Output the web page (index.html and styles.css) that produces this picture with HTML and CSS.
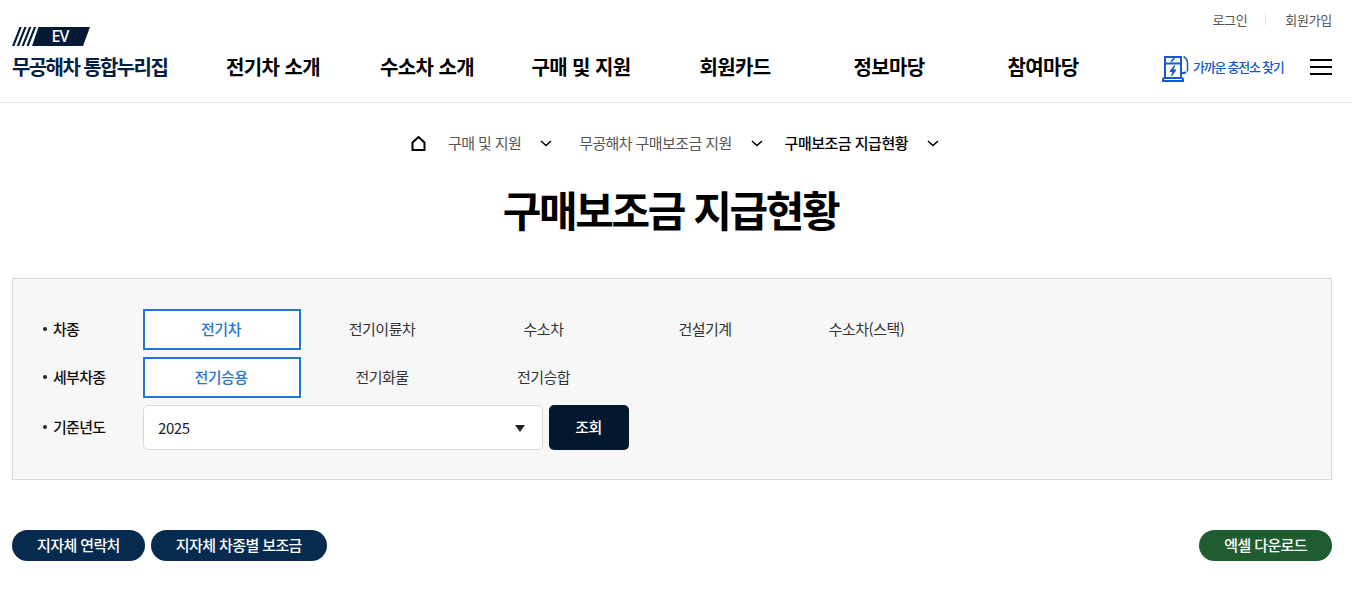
FILE: index.html
```html
<!DOCTYPE html>
<html lang="ko">
<head>
  <meta charset="UTF-8">
  <title>구매보조금 지급현황</title>
  <link rel="stylesheet" href="styles.css">
</head>
<body>

  <header class="site-header">
    <a class="logo" href="#">
      <svg class="logo-mark" width="78" height="19" viewBox="0 0 78 19">
        <path d="M0 19 7.500 0h2.300L2.300 19zM4.800 19 12.300 0h2.300L7.100 19zM9.600 19 17.100 0h2.300l-7.500 19zM14.400 19 21.900 0h2.300l-7.500 19zM20 19 26.500 0H78l-7 19z" fill="#041a35"/>
        <text x="48" y="15" text-anchor="middle" class="logo-ev">EV</text>
      </svg>
      <span class="logo-name">무공해차 통합누리집</span>
    </a>

    <div class="header-right">
      <div class="util-links">
        <a href="#">로그인</a>
        <span class="util-sep"></span>
        <a href="#">회원가입</a>
      </div>
      <div class="header-main">
        <nav class="gnb">
          <a href="#">전기차 소개</a>
          <a href="#">수소차 소개</a>
          <a href="#">구매 및 지원</a>
          <a href="#">회원카드</a>
          <a href="#">정보마당</a>
          <a href="#">참여마당</a>
        </nav>
        <a class="charger-link" href="#">
          <svg width="28" height="27" viewBox="0 0 28 27" fill="none" stroke="#1659c9" stroke-width="2">
            <path d="M3 23V2h16v21"/>
            <path d="M1 26v-1.500q0-1.500 1.500-1.500h17q1.500 0 1.500 1.500V26z"/>
            <path d="M3 8.500h16"/>
            <path d="M12.500 2.500 9 7" stroke-width="1.500"/>
            <path d="M12.500 10.500 8 16.500h3l-1.500 4.500 4.500-6h-3z" fill="#1659c9" stroke-width="1"/>
            <path d="M19 18h3q1.500 0 1.500-1.500"/>
            <path d="M21.500 1.500q4 2.500 4 6.500v8.500" stroke-width="1.500"/>
          </svg>
          <span>가까운 충전소 찾기</span>
        </a>
        <button class="menu-btn" type="button" aria-label="메뉴">
          <span></span><span></span><span></span>
        </button>
      </div>
    </div>
  </header>

  <main>
    <div class="breadcrumb">
      <svg class="home-icon" width="15" height="15" viewBox="0 0 15 15" fill="none" stroke="#000" stroke-width="2">
        <path d="M1.500 14V6.500L7.500 1l6 5.500V14z"/>
      </svg>
      <a class="crumb crumb-1" href="#">구매 및 지원</a>
      <svg class="chevron" width="12" height="7" viewBox="0 0 12 7" fill="none" stroke="#000" stroke-width="1.500"><path d="M1 1l5 4.500L11 1"/></svg>
      <a class="crumb crumb-2" href="#">무공해차 구매보조금 지원</a>
      <svg class="chevron" width="12" height="7" viewBox="0 0 12 7" fill="none" stroke="#000" stroke-width="1.500"><path d="M1 1l5 4.500L11 1"/></svg>
      <a class="crumb crumb-current" href="#">구매보조금 지급현황</a>
      <svg class="chevron" width="12" height="7" viewBox="0 0 12 7" fill="none" stroke="#000" stroke-width="1.500"><path d="M1 1l5 4.500L11 1"/></svg>
    </div>

    <h1 class="page-title">구매보조금 지급현황</h1>

    <form class="search-panel">
      <div class="search-row">
        <span class="search-label">차종</span>
        <div class="tabs">
          <button class="tab active" type="button">전기차</button>
          <button class="tab" type="button">전기이륜차</button>
          <button class="tab" type="button">수소차</button>
          <button class="tab" type="button">건설기계</button>
          <button class="tab" type="button">수소차(스택)</button>
        </div>
      </div>
      <div class="search-row">
        <span class="search-label">세부차종</span>
        <div class="tabs">
          <button class="tab active" type="button">전기승용</button>
          <button class="tab" type="button">전기화물</button>
          <button class="tab" type="button">전기승합</button>
        </div>
      </div>
      <div class="search-row">
        <span class="search-label">기준년도</span>
        <div class="year-select">
          <span>2025</span>
          <i class="select-arrow"></i>
        </div>
        <button class="search-btn" type="button">조회</button>
      </div>
    </form>

    <div class="action-bar">
      <button class="pill" type="button">지자체 연락처</button>
      <button class="pill" type="button">지자체 차종별 보조금</button>
      <button class="pill pill-excel" type="button">엑셀 다운로드</button>
    </div>
  </main>

</body>
</html>
```

FILE: styles.css
```css
* {
  box-sizing: border-box;
}

body {
  margin: 0;
  font-family: 'Noto Sans CJK KR', 'Noto Sans', sans-serif;
  color: #111;
  background: #fff;
}

a {
  color: inherit;
  text-decoration: none;
}

button {
  font-family: inherit;
  cursor: pointer;
}

/* header */
.site-header {
  display: flex;
  height: 103px;
  padding: 0 20px 0 12px;
  border-bottom: 1px solid #e5e5e5;
}

.logo {
  display: flex;
  flex-direction: column;
  width: 183px;
  padding-top: 27px;
}

.logo-mark {
  display: block;
  overflow: visible;
}

.logo-ev {
  font-family: 'Noto Sans', sans-serif;
  font-size: 16px;
  font-weight: 500;
  letter-spacing: -1px;
  fill: #fff;
}

.logo-name {
  margin-top: 7px;
  font-size: 20px;
  line-height: 28px;
  font-weight: 700;
  letter-spacing: -1.6px;
  color: #06203f;
  white-space: nowrap;
}

.header-right {
  flex: 1;
}

.util-links {
  display: flex;
  justify-content: flex-end;
  align-items: center;
  gap: 19px;
  height: 39px;
  padding-bottom: 1px;
  font-size: 13px;
  letter-spacing: -0.3px;
  color: #555;
}

.util-links a:first-child {
  margin-right: -1px;
}

.util-sep {
  width: 1px;
  height: 12px;
  background: #ddd;
}

.header-main {
  display: flex;
  align-items: center;
  height: 55px;
}

.gnb {
  display: grid;
  grid-template-columns: repeat(6, 154px);
  width: 967px;
  padding: 0 0 1px 1px;
}

.gnb a {
  text-align: center;
  font-size: 20px;
  font-weight: 700;
  letter-spacing: -0.6px;
  color: #000;
  white-space: nowrap;
}

.charger-link {
  display: flex;
  align-items: center;
  gap: 3px;
  font-size: 13px;
  font-weight: 500;
  letter-spacing: -1.25px;
  color: #1659c9;
  white-space: nowrap;
}

.charger-link svg {
  margin-top: 3px;
}

.charger-link span {
  padding-bottom: 1px;
}

.menu-btn {
  display: flex;
  flex-direction: column;
  gap: 5px;
  width: 22px;
  margin: 1px 0 0 auto;
  padding: 0;
  border: 0;
  background: none;
}

.menu-btn span {
  display: block;
  height: 2px;
  background: #000;
}

/* breadcrumb + title */
.breadcrumb {
  display: flex;
  justify-content: center;
  align-items: center;
  height: 28px;
  margin-top: 26px;
  padding-right: 2px;
  font-size: 15px;
  letter-spacing: -0.6px;
  color: #555;
}

.crumb {
  padding-bottom: 2px;
}

.crumb-1 {
  margin-left: 22px;
}

.crumb-2 {
  margin-left: 27px;
}

.crumb-current {
  margin-left: 22px;
  font-weight: 500;
  letter-spacing: -0.5px;
  color: #000;
}

.chevron {
  margin-left: 19px;
}

.page-title {
  margin: 22px 0 0;
  height: 60px;
  padding-right: 11px;
  text-align: center;
  font-size: 42px;
  line-height: 60px;
  font-weight: 700;
  letter-spacing: -2.4px;
  color: #000;
}

/* search panel */
.search-panel {
  display: flex;
  flex-direction: column;
  gap: 7px;
  height: 202px;
  margin: 39px 20px 0 12px;
  padding: 30px 29px 0 30px;
  border: 1px solid #d8d8d8;
  background: #f7f7f7;
}

.search-row {
  display: flex;
  align-items: center;
}

.search-label {
  display: flex;
  align-items: center;
  gap: 6px;
  width: 100px;
  padding-bottom: 2px;
  font-size: 15px;
  font-weight: 500;
  letter-spacing: -0.7px;
  color: #111;
}

.search-label::before {
  content: "";
  width: 4px;
  height: 4px;
  border-radius: 50%;
  background: #222;
}

.tabs {
  display: flex;
  gap: 3.500px;
}

.tab {
  width: 158px;
  height: 41px;
  padding: 0 3px 2px 0;
  border: 0;
  background: none;
  font-size: 15px;
  letter-spacing: -0.5px;
  color: #333;
}

.tab.active {
  padding-right: 2px;
  border: 2px solid #2475d4;
  background: #fff;
  font-weight: 500;
  color: #2475d4;
}

.year-select {
  display: flex;
  justify-content: space-between;
  align-items: center;
  width: 400px;
  height: 45px;
  padding: 0 17px 0 14px;
  border: 1px solid #d8d8d8;
  border-radius: 5px;
  background: #fff;
  font-size: 15px;
  letter-spacing: -0.4px;
  color: #222;
}

.select-arrow {
  width: 0;
  height: 0;
  margin-top: 2px;
  border-style: solid;
  border-width: 7px 5px 0;
  border-color: #222 transparent transparent;
}

.search-btn {
  width: 80px;
  height: 45px;
  margin-left: 6px;
  padding: 0 1px 2px 0;
  border: 0;
  border-radius: 5px;
  background: #03182f;
  font-size: 15px;
  font-weight: 500;
  letter-spacing: -0.5px;
  color: #fff;
}

/* bottom buttons */
.action-bar {
  display: flex;
  gap: 6px;
  margin: 50px 20px 0 12px;
}

.pill {
  height: 31px;
  padding: 0 25px 2px;
  border: 0;
  border-radius: 16px;
  background: #072b4f;
  font-size: 15px;
  font-weight: 500;
  letter-spacing: -0.6px;
  color: #fff;
  white-space: nowrap;
}

.pill-excel {
  margin-left: auto;
  background: #1f5c30;
}
```
